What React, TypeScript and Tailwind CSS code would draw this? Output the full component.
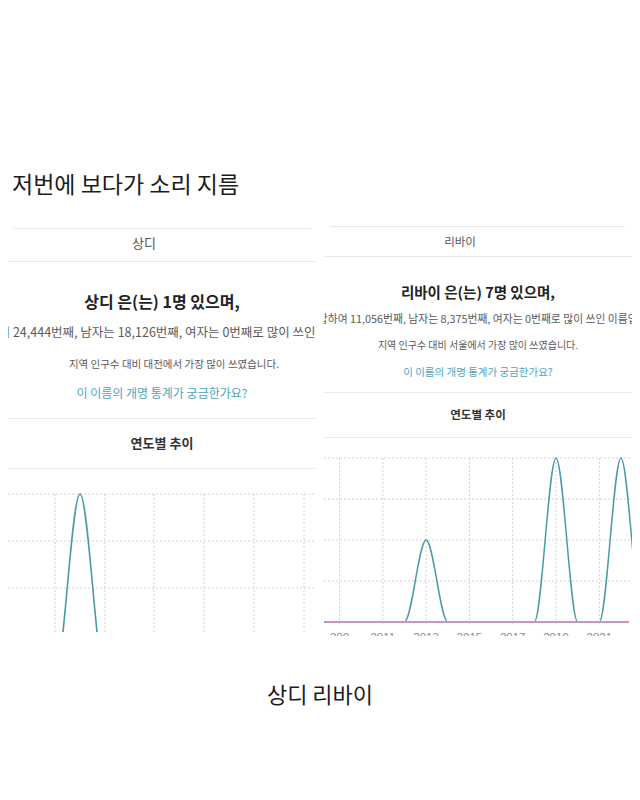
import React from "react";

function smooth(points: [number, number][]): string {
  let d = `M ${points[0][0]} ${points[0][1]}`;
  for (let i = 1; i < points.length; i++) {
    const [x0, y0] = points[i - 1];
    const [x1, y1] = points[i];
    const dx = x1 - x0;
    d += ` C ${x0 + dx / 3} ${y0} ${x1 - dx / 3} ${y1} ${x1} ${y1}`;
  }
  return d;
}

function LeftChart() {
  const hs = [25, 72, 119];
  const vs = [47, 97, 146, 196, 246, 296];
  const pts: [number, number][] = [
    [-10, 213],
    [46.4, 213],
    [72, 25],
    [97.6, 213],
    [320, 213],
  ];
  return (
    <svg width="308" height="163" viewBox="0 0 308 163" className="block">
      {hs.map((y) => (
        <line key={"h" + y} x1="0" x2="308" y1={y} y2={y} stroke="#d2d2d2" strokeWidth="1" strokeDasharray="2 2" />
      ))}
      {vs.map((x) => (
        <line key={"v" + x} x1={x} x2={x} y1="25" y2="163" stroke="#d2d2d2" strokeWidth="1" strokeDasharray="2 2" />
      ))}
      <path d={smooth(pts)} fill="none" stroke="#4b9ba6" strokeWidth="1.6" />
    </svg>
  );
}

function RightChart() {
  const hs = [20, 61, 102, 143];
  const years = [2009, 2011, 2013, 2015, 2017, 2019, 2021];
  const xOf = (y: number) => 15.5 + (y - 2009) * 21.65;
  const values: Record<number, number> = { 2013: 1, 2019: 2, 2022: 2 };
  const pts: [number, number][] = [];
  for (let y = 2008; y <= 2023; y++) {
    pts.push([xOf(y), 184 - (values[y] || 0) * 82]);
  }
  return (
    <svg width="308" height="198" viewBox="0 0 308 198" className="block">
      {hs.map((y) => (
        <line key={"h" + y} x1="0" x2="306" y1={y} y2={y} stroke="#d2d2d2" strokeWidth="1" strokeDasharray="2 2" />
      ))}
      {years.map((yr) => (
        <line key={"v" + yr} x1={xOf(yr)} x2={xOf(yr)} y1="20" y2="188" stroke="#d2d2d2" strokeWidth="1" strokeDasharray="2 2" />
      ))}
      <path d={smooth(pts)} fill="none" stroke="#4b9ba6" strokeWidth="1.5" />
      <line x1="2" x2="305" y1="184" y2="184" stroke="#c995bf" strokeWidth="2" />
      {years.map((yr) => (
        <text
          key={"t" + yr}
          x={xOf(yr)}
          y="203"
          textAnchor="middle"
          fontSize="11.5"
          fill="#8a8a8a"
          fontFamily="'Liberation Sans', sans-serif"
        >
          {yr === 2009 ? "200" : String(yr)}
        </text>
      ))}
    </svg>
  );
}

export default function App() {
  return (
    <div className="w-[640px] h-[800px] bg-white overflow-hidden font-['Noto_Sans_CJK_KR',sans-serif]">
      <div className="pt-[166px] pl-[12px] text-[23px] leading-[34px] text-[#1c1c1c]">저번에 보다가 소리 지름</div>

      <div className="mt-[26px] flex items-start">
        {/* Left panel */}
        <div className="ml-[8px] mt-[2px] w-[308px] overflow-hidden">
          <div className="mx-[5px] h-px bg-[#e8e8e8]" />
          <div className="pt-[4px] pb-[8px] pr-[36px] text-center text-[13px] leading-[20px] text-[#555]">상디</div>
          <div className="h-px bg-[#e8e8e8]" />
          <div className="pt-[27px] text-center text-[16px] leading-[24px] font-bold text-[#222]">상디 은(는) 1명 있으며,</div>
          <div className="mt-[10px] flex justify-center overflow-hidden whitespace-nowrap text-[12.5px] leading-[18px] text-[#5a5a5a]">
            <span className="shrink-0 ml-[5px]">남녀 합하여 24,444번째, 남자는 18,126번째, 여자는 0번째로 많이 쓰인 이름입니다.</span>
          </div>
          <div className="mt-[14px] pl-[24px] text-center text-[10.5px] leading-[18px] text-[#5a5a5a] whitespace-nowrap">
            지역 인구수 대비 대전에서 가장 많이 쓰였습니다.
          </div>
          <div className="mt-[11px] text-center text-[12px] leading-[18px] text-[#4ea6b9] whitespace-nowrap">
            이 이름의 개명 통계가 궁금한가요?
          </div>
          <div className="mt-[16px] h-px bg-[#ececec]" />
          <div className="pt-[14px] text-center text-[13px] leading-[20px] font-bold text-[#333]">연도별 추이</div>
          <div className="mt-[15px] h-px bg-[#ececec]" />
          <LeftChart />
        </div>

        {/* Right panel */}
        <div className="ml-[8px] w-[308px] overflow-hidden">
          <div className="ml-[6px] mr-[7px] h-px bg-[#e8e8e8]" />
          <div className="pt-[5px] pb-[6px] pr-[36px] text-center text-[11.5px] leading-[18px] text-[#555]">리바이</div>
          <div className="h-px bg-[#e8e8e8]" />
          <div className="pt-[24px] text-center text-[14.5px] leading-[22px] font-bold text-[#222]">리바이 은(는) 7명 있으며,</div>
          <div className="mt-[7px] flex justify-center overflow-hidden whitespace-nowrap text-[10.8px] leading-[16px] text-[#5a5a5a]">
            <span className="shrink-0">남녀 합하여 11,056번째, 남자는 8,375번째, 여자는 0번째로 많이 쓰인 이름입니다.</span>
          </div>
          <div className="mt-[11px] text-center text-[10px] leading-[16px] text-[#5a5a5a] whitespace-nowrap">
            지역 인구수 대비 서울에서 가장 많이 쓰였습니다.
          </div>
          <div className="mt-[11px] text-center text-[10.5px] leading-[16px] text-[#4ea6b9] whitespace-nowrap">
            이 이름의 개명 통계가 궁금한가요?
          </div>
          <div className="mt-[12px] h-px bg-[#ececec]" />
          <div className="pt-[12px] text-center text-[11.5px] leading-[18px] font-bold text-[#333]">연도별 추이</div>
          <div className="mt-[14px] h-px bg-[#ececec]" />
          <RightChart />
        </div>
      </div>

      <div className="mt-[41px] text-center text-[22px] leading-[32px] text-[#1c1c1c]">상디 리바이</div>
    </div>
  );
}
